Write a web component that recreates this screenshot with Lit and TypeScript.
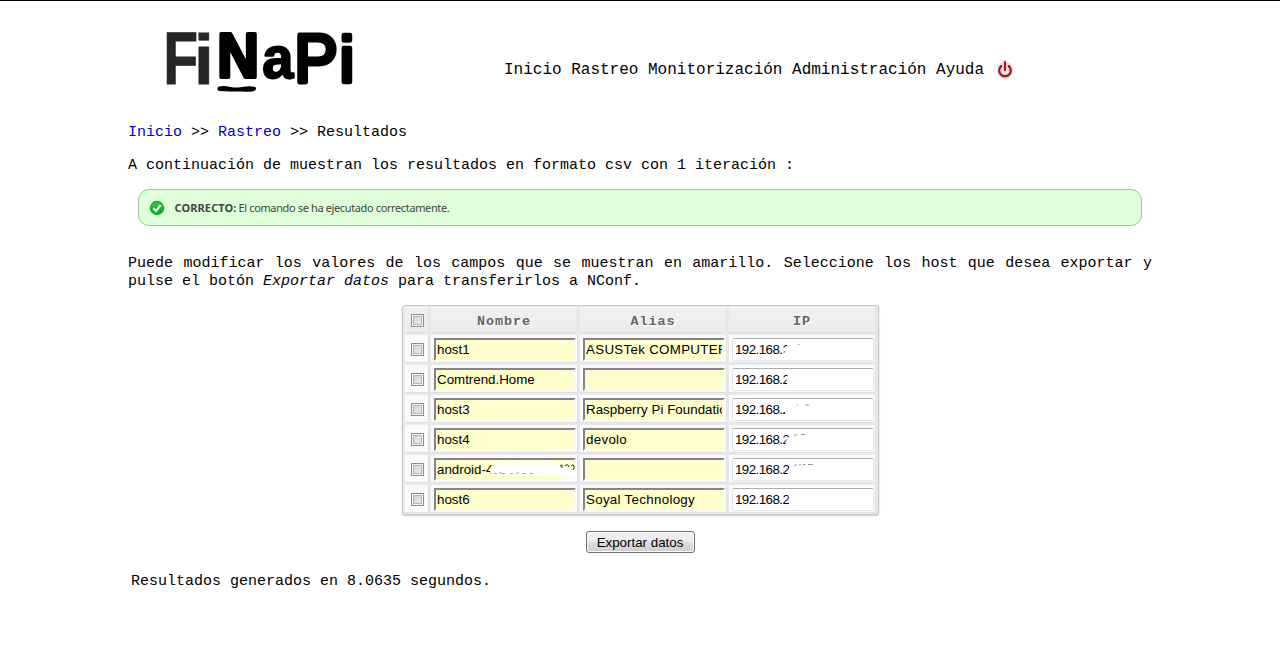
import { LitElement, html, svg, css } from "lit";
import { customElement } from "lit/decorators.js";
import { classMap } from "lit/directives/class-map.js";

interface Host {
  name: string;
  alias: string;
  ip: string;
  mask: string;
  marks: string;
}

// mask hides the private part of each address; marks are what remains visible of it
const hosts: Host[] = [
  { name: "host1", alias: "ASUSTek COMPUTER INC.", ip: "192.168.2", mask: "M55 5H62V19H50.5V14.5H53.5L52 11L55 9Z", marks: "M66 6.5h1.5" },
  { name: "Comtrend.Home", alias: "", ip: "192.168.2", mask: "M55.5 4H62V19H56L54.5 13L55.5 9Z", marks: "" },
  { name: "host3", alias: "Raspberry Pi Foundation", ip: "192.168.2", mask: "M50.4 3H62V19H53V14H50.4Z", marks: "M65 7h1M73 7h4" },
  { name: "host4", alias: "devolo", ip: "192.168.2", mask: "M56.5 9L62 3V20H53L54 13Z", marks: "M62 7.5l3-1M69 6.5h4" },
  { name: "android-4", alias: "", ip: "192.168.2", mask: "M58 8L62 3V20H55L56 13Z", marks: "M62 8l3-1.5M67 7l2-.5M71 6.5h2.5M76 6.5h5" },
  { name: "host6", alias: "Soyal Technology", ip: "192.168.2", mask: "M56.6 3H62V20H57Z", marks: "" },
];

@customElement("finapi-logo")
class FinapiLogo extends LitElement {
  static styles = css`
    :host { display: block; }
    .logo {
      display: block; margin: -20px 0; overflow: visible;
      font-family: "Liberation Sans", sans-serif; font-weight: bold; font-size: 74px;
    }
    .grey { fill: #262626; stroke: #262626; stroke-width: 0.9; }
    .ink { fill: #000; stroke: #000; stroke-linejoin: round; stroke-linecap: round; }
    .n { stroke-width: 4.6; }
    .a { stroke-width: 2.4; }
    .round { stroke-width: 5.4; font-weight: normal; }
    .line { stroke-width: 4; }
  `;
  render() {
    return html`<svg class="logo" width="200" height="110" viewBox="160 6 200 110">
      <text class="grey" transform="translate(163.2 83.6) scale(.77 1)">F</text>
      <text class="grey" transform="translate(194 83.6) scale(.96 .95)">i</text>
      <text class="ink n" transform="translate(217.3 77.4) scale(.78 .84)">N</text>
      <text class="ink a" transform="translate(262.3 77.8) scale(.76 .80)">a</text>
      <text class="ink round" transform="translate(294.2 81.8) scale(.88 .92)">P</text>
      <text class="ink round" transform="translate(339.4 81.8) scale(.9 .877)">i</text>
      <path class="ink line" d="M219.5 88.4Q224 87.4 229 88.6Q237 90.4 244 88.8Q249 87.6 254 88.6Q252 90.2 241 89.6Q230 89.6 219.5 88.9Z" />
    </svg>`;
  }
}

@customElement("status-alert")
class StatusAlert extends LitElement {
  static styles = css`
    .box {
      display: flex; align-items: center; box-sizing: border-box; height: 37px;
      border: 1px solid #9ccb93; border-radius: 11px; background: #dffed9;
      padding: 0 9.5px; color: #444;
      font: 11px/16px "Noto Sans", sans-serif;
    }
    .tick { flex: none; margin-right: 10px; }
    .strong { font-weight: bold; letter-spacing: 0.1px; margin-right: 2px; }
    .text { letter-spacing: -0.37px; }
  `;
  render() {
    return html`<div class="box">
      <svg class="tick" width="16" height="16" viewBox="0 0 16 16">
        <circle cx="8" cy="8" r="7.2" fill="#12b021" />
        <path d="M2 8a6 6 0 0 1 12 0Q8 6 2 8" fill="#2cc03b" />
        <path d="M4.3 8.2L7 11L11.6 5.2" fill="none" stroke="#fff" stroke-width="2.1" />
      </svg>
      <span class="strong">CORRECTO:</span><span class="text">El comando se ha ejecutado correctamente.</span>
    </div>`;
  }
}

@customElement("host-table")
class HostTable extends LitElement {
  static styles = css`
    :host { display: block; }
    .table {
      display: grid; grid-template-columns: 24px 147px 147px 147px; grid-template-rows: 26px repeat(6, 28px);
      gap: 2px; box-sizing: border-box; width: 477px; height: 210px; padding: 1px 2px 0;
      border: 1px solid #c8c8c9; border-radius: 3px; background: #e9e9ea;
      box-shadow: 0 1px 2px #ccc;
    }
    .cell {
      display: flex; align-items: flex-start; box-sizing: border-box; position: relative;
      background: #fafafa; border: solid #e0e0e1; border-width: 0 1px 1px 0; padding: 3px 0 0 3px;
    }
    .head {
      align-items: center; justify-content: center; padding: 3px 0 0; background: linear-gradient(#f0f0f1, #ececed);
      border-color: #e1e1e2; border-top: 1px solid #fafafa;
      font: bold 13.5px/16px "Liberation Mono", monospace; letter-spacing: .9px; color: #666;
      text-shadow: 1px 1px 0 #fff;
    }
    .head-check { padding: 1px 0 0 1px; }
    .check { justify-content: center; padding: 8px 0 0 1px; }
    .checkbox {
      appearance: none; box-sizing: border-box; width: 13px; height: 13px; margin: 0;
      border: 1px solid #8e8f8f; background: linear-gradient(135deg, #c8ccd2, #f4f4f5);
      box-shadow: inset 0 0 0 1px #f4f4f4, inset 0 0 0 2px #b4b8be;
    }
    .field {
      box-sizing: border-box; width: 142px; height: 23px; margin: 0; padding: 0 1px;
      font: 13.33px/18px "Liberation Sans", Arial, sans-serif; color: #000; outline: none;
    }
    .yellow { background: #ffffcc; border: 2px solid; border-color: #848484 #fafafa #fafafa #848484; }
    .alias { letter-spacing: .3px; }
    .long { letter-spacing: .03px; }
    .ip {
      background: #fff; border: 1px solid #e2e3ea; border-top-color: #abadb3; border-radius: 2px;
      padding: 0 2px; letter-spacing: -.55px;
    }
    .cover { position: absolute; left: 3px; top: 3px; pointer-events: none; }
  `;
  render() {
    return html`<div class="table">
      <div class="cell head head-check"><input class="checkbox" type="checkbox" /></div>
      <div class="cell head">Nombre</div>
      <div class="cell head">Alias</div>
      <div class="cell head">IP</div>
      ${hosts.map(
        (h) => html`
          <div class="cell check"><input class="checkbox" type="checkbox" /></div>
          <div class="cell">
            <input class="field yellow" .value=${h.name} />
            ${h.name.startsWith("android")
              ? html`<svg class="cover" width="144" height="24">
                  <path d="M57 8Q62 3 80 4L110 3L128 7Q141 8 142 15Q142 22 134 21Q123 17 110 18H59Q54 14 57 8Z" fill="#fff" />
                  <path d="M60 15.5h3M65 14l2 1.5h4M76 15.5h3M82 15h3M88 15.5h4M96 15.5h3" stroke="#77776a" fill="none" opacity=".65" />
                  <path d="M126 8l2-1v3M131 8q3-3 4 1M137 8q3-3 3 2l-1 2" stroke="#222" fill="none" />
                </svg>`
              : ""}
          </div>
          <div class="cell">
            <input class=${classMap({ field: true, yellow: true, alias: true, long: h.alias.length > 21 })} .value=${h.alias} />
          </div>
          <div class="cell">
            <input class="field ip" .value=${h.ip} />
            <svg class="cover" width="140" height="22">${svg`
              <path d=${h.mask} fill="#fff" />
              <path d=${h.marks} fill="none" stroke="#667" stroke-width="1" opacity=".7" />`}
            </svg>
          </div>
        `
      )}
    </div>`;
  }
}

@customElement("app-root")
class AppRoot extends LitElement {
  static styles = css`
    :host {
      display: block; box-sizing: border-box; height: 659px; overflow: hidden; background: #fff;
      border-top: 1px solid #000; color: #000; font: 15px/18px "Liberation Mono", "Courier New", monospace;
    }
    .page { width: 1024px; margin: 0 auto; }
    .header { display: flex; align-items: flex-start; padding: 25px 0 0 32px; height: 70px; }
    .nav { display: flex; align-items: center; gap: 9.6px; margin: 34px 0 0 144px; font-size: 16px; line-height: 20px; }
    .power { margin-left: 2px; }
    .crumbs { margin-top: 28px; }
    .link { color: #0000cc; text-decoration: none; }
    .intro { margin: 15px 0 14px; }
    .alert { display: block; margin: 0 10px; }
    .help { margin: 29px 0 14px; text-align: justify; }
    .hosts { margin-left: 274px; }
    .actions { display: flex; justify-content: center; margin-top: 16px; }
    .button {
      box-sizing: border-box; width: 109px; height: 22px; padding: 1px 0 0; border: 1px solid #707070; border-radius: 3px;
      background: linear-gradient(#f2f2f2, #ebebeb 50%, #ddd 50%, #cfcfcf); box-shadow: inset 0 0 0 1px #fafafa;
      font: 13.33px/18px "Liberation Sans", Arial, sans-serif; color: #000;
    }
    .footer { margin: 20px 0 0 3px; }
  `;
  render() {
    return html`<div class="page">
      <div class="header">
        <finapi-logo></finapi-logo>
        <div class="nav">
          <span>Inicio</span><span>Rastreo</span><span>Monitorización</span><span>Administración</span><span>Ayuda</span>
          <svg class="power" width="18" height="20" viewBox="0 0 18 20">
            <path d="M5.3 6A5.8 5.8 0 1 0 12.7 6M9 2.5V10" fill="none" stroke="#ccc" stroke-width="5" stroke-linecap="round" />
            <path d="M5.3 6A5.8 5.8 0 1 0 12.7 6M9 2.5V10" fill="none" stroke="#fff" stroke-width="3.6" stroke-linecap="round" />
            <path d="M5.3 6A5.8 5.8 0 1 0 12.7 6M9 2.5V10" fill="none" stroke="#b01010" stroke-width="2.3" stroke-linecap="round" />
          </svg>
        </div>
      </div>
      <div class="crumbs"><a class="link" href="#">Inicio</a> &gt;&gt; <a class="link" href="#">Rastreo</a> &gt;&gt; Resultados</div>
      <div class="intro">A continuación de muestran los resultados en formato csv con 1 iteración :</div>
      <status-alert class="alert"></status-alert>
      <div class="help">Puede modificar los valores de los campos que se muestran en amarillo. Seleccione los host que desea exportar y pulse el botón <em>Exportar datos</em> para transferirlos a NConf.</div>
      <host-table class="hosts"></host-table>
      <div class="actions"><button class="button">Exportar datos</button></div>
      <div class="footer">Resultados generados en 8.0635 segundos.</div>
    </div>`;
  }
}
